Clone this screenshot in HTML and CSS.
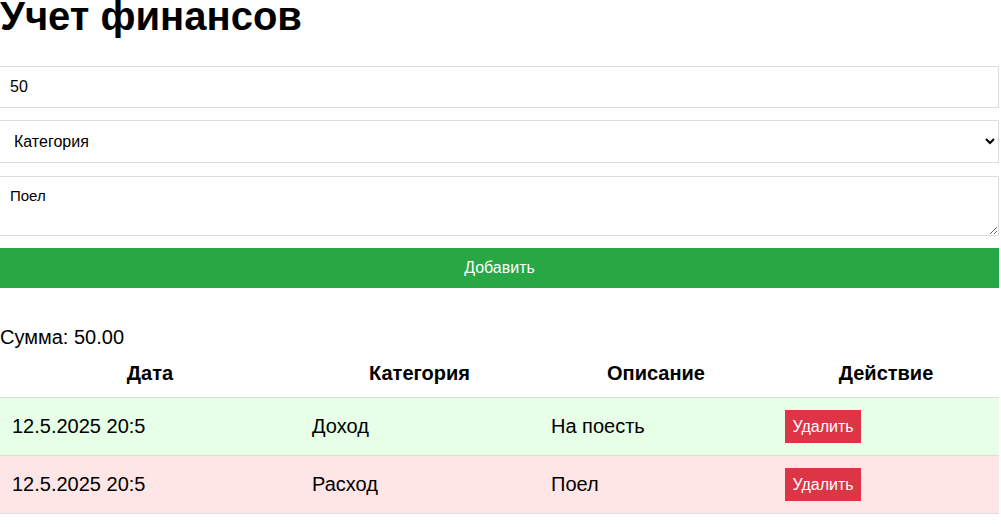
FILE: index.html
```html
<!DOCTYPE html>
<html lang="ru">
<head>
<meta charset="utf-8">
<title>Учет финансов</title>
<link rel="stylesheet" href="styles.css">
</head>
<body>
<div class="app">
  <h1 class="title">Учет финансов</h1>
  <form class="form">
    <input class="field field-input" type="number" value="50">
    <select class="field field-select">
      <option>Категория</option>
      <option>Доход</option>
      <option>Расход</option>
    </select>
    <textarea class="field field-textarea">Поел</textarea>
    <button class="btn-add" type="button">Добавить</button>
  </form>
  <div class="total">Сумма: 50.00</div>
  <table class="table">
    <thead>
      <tr>
        <th class="col-date">Дата</th>
        <th class="col-cat">Категория</th>
        <th class="col-desc">Описание</th>
        <th class="col-act">Действие</th>
      </tr>
    </thead>
    <tbody>
      <tr class="row-income">
        <td>12.5.2025 20:5</td>
        <td>Доход</td>
        <td>На поесть</td>
        <td><button class="btn-del" type="button">Удалить</button></td>
      </tr>
      <tr class="row-expense">
        <td>12.5.2025 20:5</td>
        <td>Расход</td>
        <td>Поел</td>
        <td><button class="btn-del" type="button">Удалить</button></td>
      </tr>
    </tbody>
  </table>
</div>
</body>
</html>
```
FILE: styles.css
```css
html, body {
  margin: 0;
  padding: 0;
  background: #fff;
}
body {
  font-family: "Liberation Sans", Arial, sans-serif;
  color: #000;
}
.app {
  width: 999px;
}
.title {
  margin: 0 0 34px;
  font-size: 40px;
  line-height: 32px;
  font-weight: bold;
}
.form {
  display: flex;
  flex-direction: column;
  gap: 12px;
  margin: 0;
}
.field {
  box-sizing: border-box;
  width: 999px;
  margin: 0;
  border: 1px solid #ddd;
  border-left: none;
  padding: 10px;
  font-family: "Liberation Sans", Arial, sans-serif;
  font-size: 16px;
  color: #000;
  background: #fff;
  border-radius: 0;
  outline: none;
}
.field-input {
  height: 42px;
  -moz-appearance: textfield;
}
.field-input::-webkit-outer-spin-button,
.field-input::-webkit-inner-spin-button {
  -webkit-appearance: none;
  margin: 0;
}
.field-select {
  height: 43px;
  margin-bottom: 1px;
}
.field-textarea {
  height: 60px;
  font-size: 15px;
  resize: vertical;
  display: block;
}
.btn-add {
  height: 40px;
  width: 999px;
  border: none;
  margin: 0;
  background: #28a745;
  color: #fff;
  font-family: "Liberation Sans", Arial, sans-serif;
  font-size: 16px;
  cursor: pointer;
}
.total {
  margin-top: 38px;
  font-size: 20px;
  line-height: 23px;
}
.table {
  margin-top: 1px;
  width: 999px;
  border-collapse: collapse;
  table-layout: fixed;
  font-size: 20px;
  line-height: 23px;
}
.table th,
.table td {
  box-sizing: border-box;
  padding: 12px;
  border-bottom: 1px solid #ddd;
  vertical-align: middle;
}
.table th {
  text-align: center;
  font-weight: bold;
}
.table td {
  text-align: left;
}
.col-date { width: 300px; }
.col-cat { width: 239px; }
.col-desc { width: 234px; }
.col-act { width: 226px; }
.row-income { background: #e6ffe6; }
.row-expense { background: #ffe6e6; }
.btn-del {
  display: inline-block;
  border: none;
  margin: 0;
  padding: 7px 7.5px;
  background: #dc3545;
  color: #fff;
  font-family: "Liberation Sans", Arial, sans-serif;
  font-size: 16px;
  line-height: 19px;
  vertical-align: middle;
  cursor: pointer;
}
```
